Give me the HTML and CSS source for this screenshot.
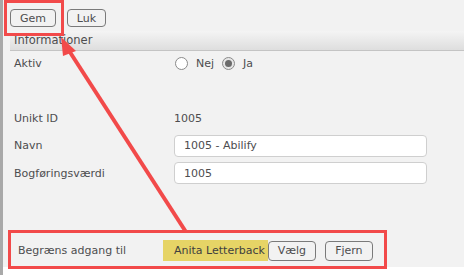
FILE: index.html
```html
<!DOCTYPE html>
<html lang="da">
<head>
    <meta charset="UTF-8">
    <title>Præparat</title>
    <link rel="stylesheet" href="styles.css">
</head>
<body>
    <div class="page">
        <div class="edge"></div>
        <div class="main">
            <div class="toolbar">
                <button class="btn btn-gem">Gem</button>
                <button class="btn btn-luk">Luk</button>
            </div>
            <div class="section">
                <div class="section-head">Informationer</div>
                <div class="form">
                    <div class="label">Aktiv</div>
                    <div class="field radios">
                        <span class="radio"></span><span class="radio-text">Nej</span>
                        <span class="radio checked"></span><span class="radio-text">Ja</span>
                    </div>
                    <div class="label"></div>
                    <div class="field"></div>
                    <div class="label">Unikt ID</div>
                    <div class="field">1005</div>
                    <div class="label">Navn</div>
                    <div class="field"><input class="input" type="text" value="1005 - Abilify"></div>
                    <div class="label">Bogføringsværdi</div>
                    <div class="field"><input class="input" type="text" value="1005"></div>
                </div>
                <div class="access">
                    <div class="access-label">Begræns adgang til</div>
                    <div class="access-name">Anita Letterback</div>
                    <button class="btn btn-small">Vælg</button>
                    <button class="btn btn-small btn-fjern">Fjern</button>
                </div>
            </div>
        </div>
    </div>
    <!-- annotationer lagt ovenpå -->
    <svg class="marks" width="464" height="275" viewBox="0 0 464 275">
        <rect x="5.5" y="1.5" width="57" height="33" fill="none" stroke="#f24a4a" stroke-width="3"/>
        <rect x="9.5" y="231.5" width="376" height="36" fill="none" stroke="#f24a4a" stroke-width="3"/>
        <line x1="186" y1="232" x2="66" y2="46" stroke="#f24a4a" stroke-width="4"/>
        <polygon points="61,37 76,51 63,56" fill="#f24a4a"/>
    </svg>
</body>
</html>
```

FILE: styles.css
```css
*{
    margin: 0;
    padding: 0;
    box-sizing: border-box;
}
body{
    width: 464px;
    height: 275px;
    overflow: hidden;
    background: #fff;
    font-family: "DejaVu Sans", Verdana, sans-serif;
    font-size: 11px;
    color: #4d4d4f;
    position: relative;
}
.page{
    display: flex;
    height: 275px;
}
.edge{
    width: 3px;
    background: #a9a9a9;
}
.main{
    flex: 1;
    height: 267px;
    background: #f2f2f2;
}
.toolbar{
    display: flex;
    gap: 11px;
    padding: 9px 0 0 7px;
    height: 31px;
}
.btn{
    height: 18px;
    border: 1px solid #7a7a7a;
    border-radius: 4px;
    background: #f2f2f2;
    font-family: inherit;
    font-size: 11px;
    color: #4d4d4f;
}
.btn-gem{
    width: 46px;
}
.btn-luk{
    width: 39px;
}
.section{
    margin-left: 7px;
}
.section-head{
    height: 20px;
    line-height: 18px;
    padding-left: 4px;
    font-size: 11.5px;
    background: linear-gradient(#f4f4f4, #dedede);
    border-bottom: 1px solid #c4c4c4;
}
.form{
    display: grid;
    grid-template-columns: 160px 253px;
    grid-auto-rows: 22px;
    row-gap: 5.5px;
    padding: 1px 0 0 4px;
}
.label, .field{
    display: flex;
    align-items: center;
}
.radios{
    gap: 0;
}
.radio{
    width: 13px;
    height: 13px;
    border: 1px solid #8a8a8a;
    border-radius: 50%;
    background: #fff;
    margin-left: 1px;
    display: flex;
    align-items: center;
    justify-content: center;
}
.radio.checked{
    background: #e6e6e6;
}
.radio.checked::after{
    content: "";
    width: 7px;
    height: 7px;
    border-radius: 50%;
    background: #6a6a6a;
}
.radio-text{
    margin: 0 7px 0 8px;
}
.input{
    width: 253px;
    height: 22px;
    border: 1px solid #cfcfcf;
    border-radius: 4px;
    background: #fff;
    padding-left: 9px;
    font-family: inherit;
    font-size: 11px;
    color: #4d4d4f;
    outline: none;
}
.access{
    display: flex;
    align-items: center;
    margin-top: 56px;
    padding-left: 8px;
    height: 21px;
}
.access-label{
    width: 145px;
}
.access-name{
    height: 21px;
    line-height: 21px;
    padding: 0 3px 0 11px;
    background: #e6d466;
    color: #3f3f3f;
}
.btn-small{
    width: 48px;
    height: 20px;
}
.btn-fjern{
    margin-left: 9px;
}
.marks{
    position: absolute;
    left: 0;
    top: 0;
}
```
